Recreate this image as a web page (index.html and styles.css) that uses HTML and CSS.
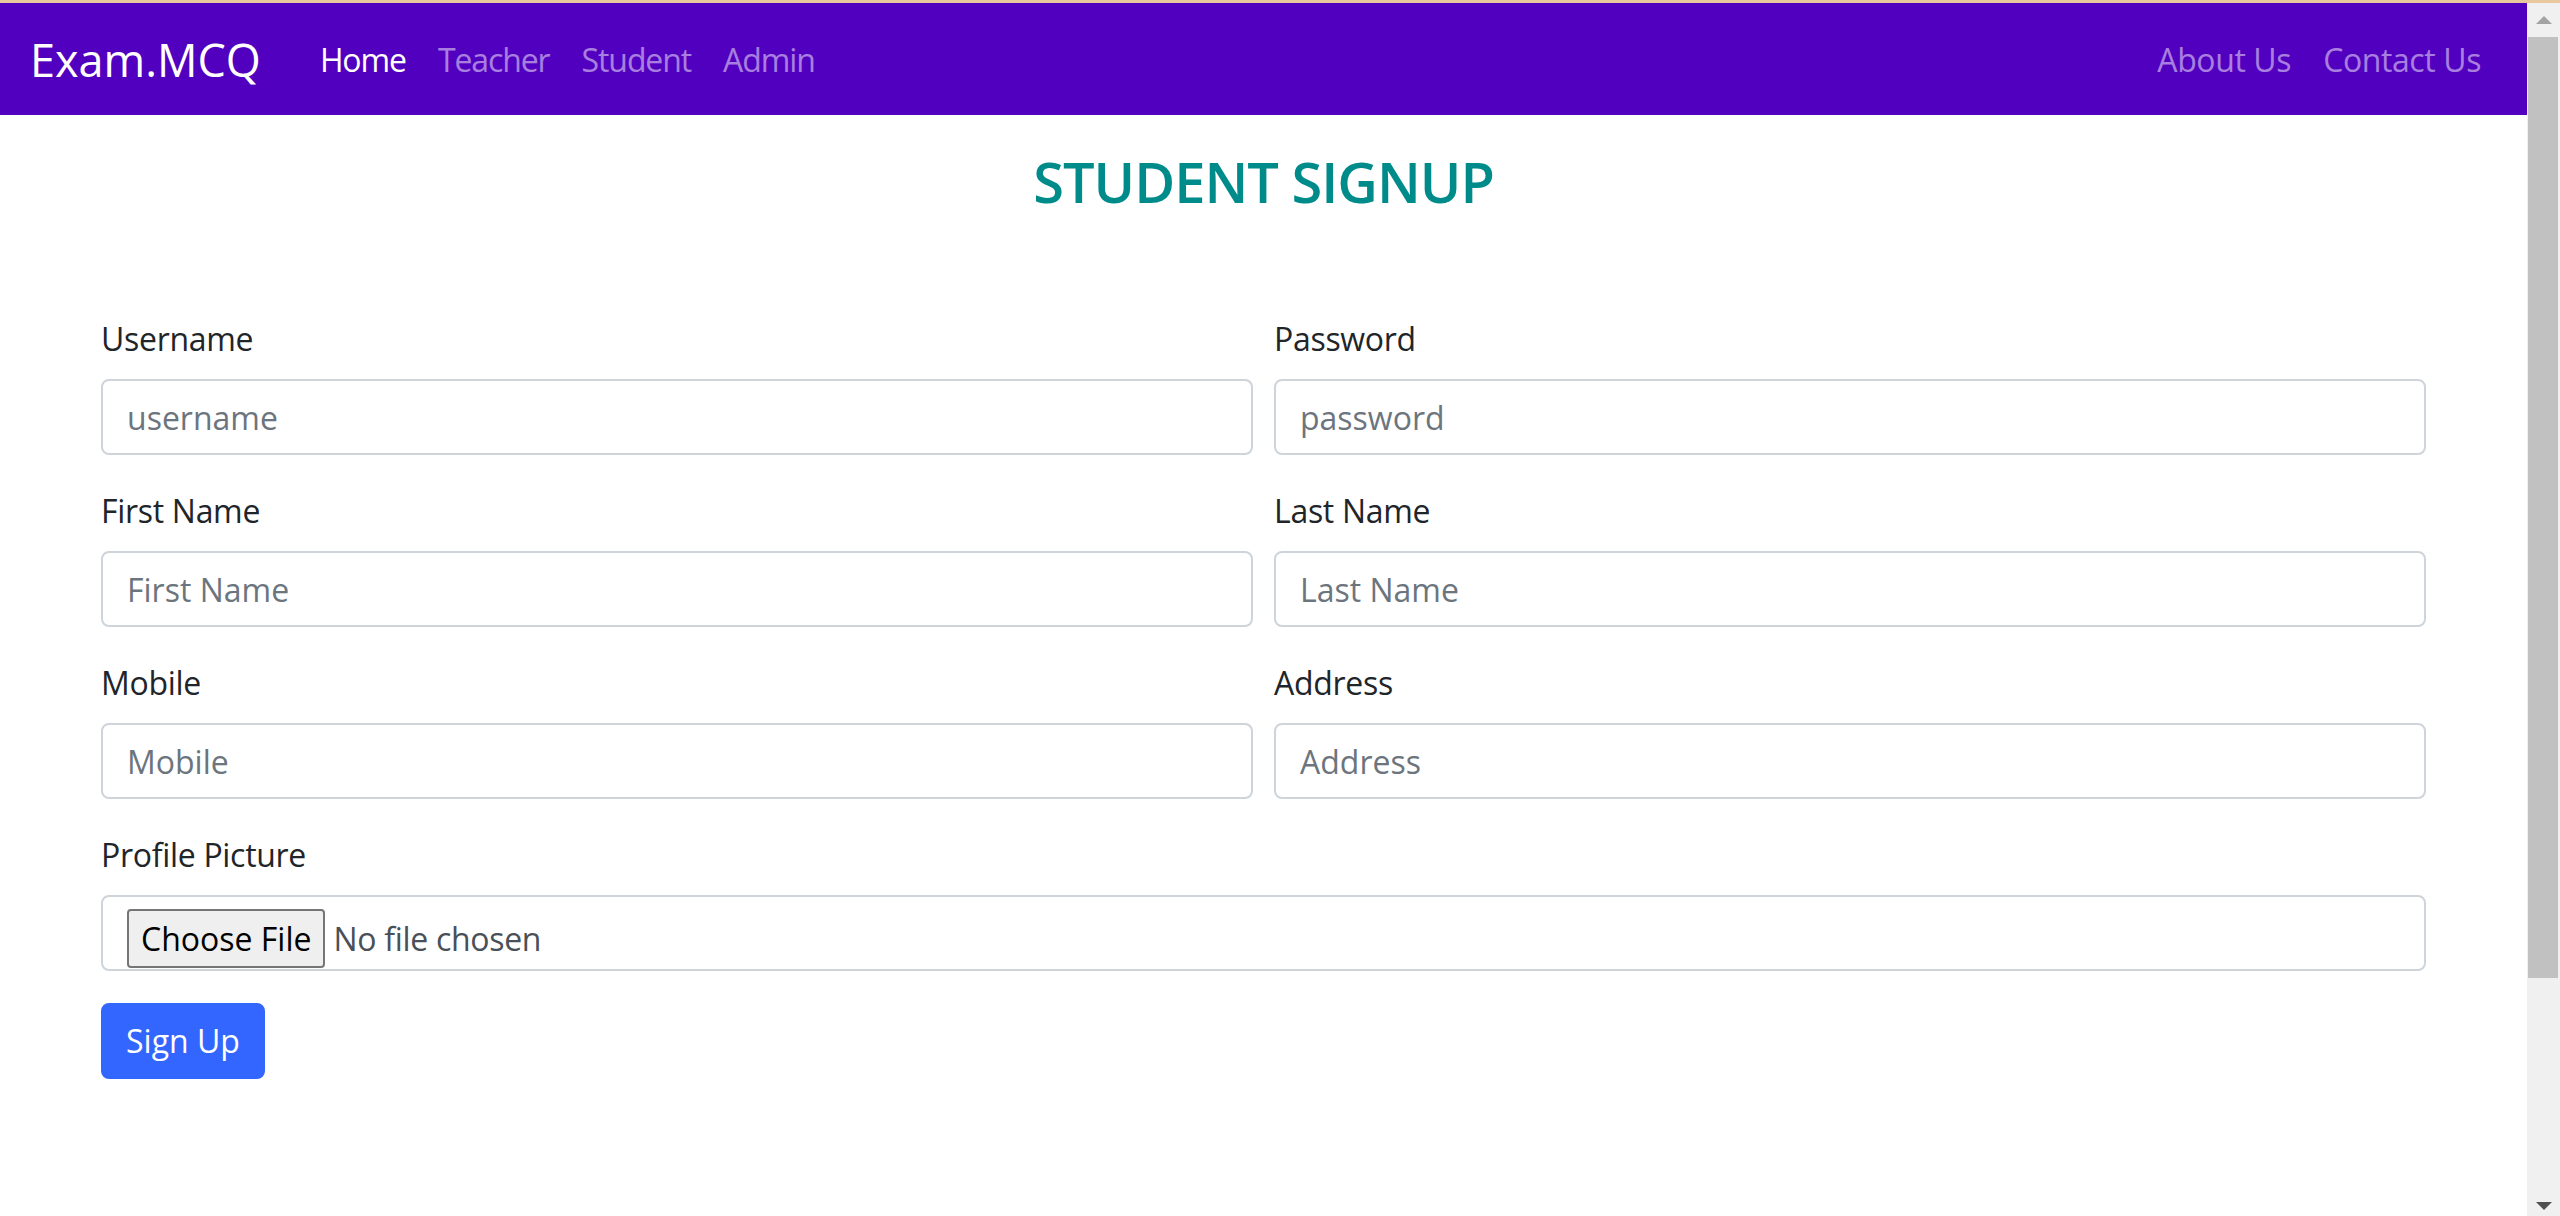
FILE: index.html
```html
<!DOCTYPE html>
<html lang="en">
<head>
<meta charset="utf-8">
<title>Student Signup</title>
<link rel="stylesheet" href="styles.css">
</head>
<body>
<div class="topline"></div>
<div class="window">
  <div class="page">
    <nav class="navbar">
      <a class="brand" href="#">Exam.MCQ</a>
      <ul class="nav-links nav-left">
        <li><a class="active" href="#">Home</a></li>
        <li><a href="#">Teacher</a></li>
        <li><a href="#">Student</a></li>
        <li><a href="#">Admin</a></li>
      </ul>
      <ul class="nav-links nav-right">
        <li><a href="#">About Us</a></li>
        <li><a href="#">Contact Us</a></li>
      </ul>
    </nav>
    <main>
      <h3 class="title">STUDENT SIGNUP</h3>
      <form class="form">
        <div class="row">
          <div class="group">
            <label class="label">Username</label>
            <input class="input" type="text" placeholder="username">
          </div>
          <div class="group">
            <label class="label">Password</label>
            <input class="input" type="password" placeholder="password">
          </div>
        </div>
        <div class="row">
          <div class="group">
            <label class="label">First Name</label>
            <input class="input" type="text" placeholder="First Name">
          </div>
          <div class="group">
            <label class="label">Last Name</label>
            <input class="input" type="text" placeholder="Last Name">
          </div>
        </div>
        <div class="row">
          <div class="group">
            <label class="label">Mobile</label>
            <input class="input" type="text" placeholder="Mobile">
          </div>
          <div class="group">
            <label class="label">Address</label>
            <input class="input" type="text" placeholder="Address">
          </div>
        </div>
        <div class="group">
          <label class="label">Profile Picture</label>
          <div class="input file">
            <span class="file-btn">Choose File</span>
            <span class="file-text">No file chosen</span>
          </div>
        </div>
        <button class="btn" type="button">Sign Up</button>
      </form>
    </main>
  </div>
  <div class="scrollbar">
    <div class="sb-btn sb-up"><span class="arrow-up"></span></div>
    <div class="thumb"></div>
    <div class="sb-space"></div>
    <div class="sb-btn sb-down"><span class="arrow-down"></span></div>
  </div>
</div>
</body>
</html>
```
FILE: styles.css
```css
* { box-sizing: border-box; }
html, body { margin: 0; height: 1216px; overflow: hidden; }
body {
  font-family: "Open Sans", "Noto Sans", sans-serif;
  color: #212529;
  background: #fff;
}
.topline { height: 3px; background: #e7c89f; }
.window { display: flex; height: 1213px; }
.page { flex: 1; min-width: 0; }

.navbar {
  background: #5200bf;
  height: 112px;
  padding: 17px 30px 15px;
  display: flex;
  align-items: center;
}
.brand {
  font-size: 45px;
  line-height: 60px;
  padding: 10px 0;
  color: #fff;
  margin-right: 43px;
  text-decoration: none;
}
.nav-links { display: flex; list-style: none; margin: 0; padding: 0; }
.nav-links a {
  display: block;
  padding: 16px;
  font-size: 32px;
  line-height: 48px;
  letter-spacing: -0.4px;
  color: rgba(255, 255, 255, 0.5);
  text-decoration: none;
}
.nav-left a { letter-spacing: -1.1px; }
.nav-links a.active { color: #fff; }
.nav-right { margin-left: auto; }

.title {
  text-align: center;
  color: #008b8b;
  font-size: 56px;
  font-weight: 600;
  line-height: 1.2;
  letter-spacing: -1px;
  margin: 33px 0 100px;
}
.form { padding: 0 101px; }
.row { display: grid; grid-template-columns: 1fr 1fr; column-gap: 21px; }
.group { margin-bottom: 32px; }
.label { display: block; font-size: 32px; line-height: 48px; margin-bottom: 16px; letter-spacing: -0.3px; }
.input {
  display: block;
  width: 100%;
  height: 76px;
  padding: 12px 24px;
  font-family: inherit;
  font-size: 32px;
  line-height: 48px;
  color: #495057;
  background: #fff;
  border: 2px solid #ced4da;
  border-radius: 8px;
  outline: none;
}
.input::placeholder { color: #6c757d; }
.file { display: flex; align-items: flex-start; gap: 8px; }
.file-btn {
  display: block;
  height: 59px;
  padding: 4px 12px;
  line-height: 48px;
  color: #000;
  background: #efefef;
  border: 2px solid #767676;
  border-radius: 4px;
}
.file-text { display: block; line-height: 59px; color: #495057; letter-spacing: -0.3px; }

.btn {
  display: inline-block;
  font-family: inherit;
  font-size: 32px;
  line-height: 48px;
  padding: 12px 23px;
  color: #fff;
  background: #3366ff;
  border: 2px solid #3366ff;
  border-radius: 8px;
}

.scrollbar {
  width: 33px;
  background: #f0f0f0;
  display: flex;
  flex-direction: column;
}
.sb-btn { height: 34px; display: flex; justify-content: center; align-items: center; }
.sb-down { align-items: flex-end; padding-bottom: 6px; }
.arrow-up {
  width: 0; height: 0;
  border-left: 8px solid transparent;
  border-right: 8px solid transparent;
  border-bottom: 8px solid #a3a3a3;
}
.arrow-down {
  width: 0; height: 0;
  border-left: 8px solid transparent;
  border-right: 8px solid transparent;
  border-top: 8px solid #505050;
}
.thumb { width: 30px; height: 941px; margin-left: 1px; background: #c1c1c1; }
.sb-space { flex: 1; }
```
